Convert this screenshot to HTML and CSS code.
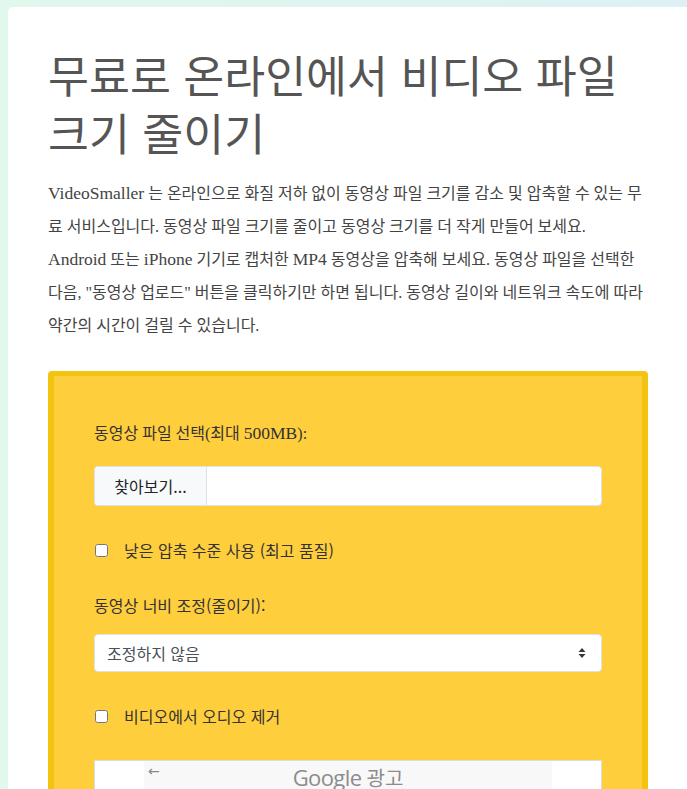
FILE: index.html
```html
<!DOCTYPE html>
<html lang="ko">
<head>
    <meta charset="utf-8">
    <link rel="stylesheet" href="styles.css">
</head>
<body>

<div class="card">
    <h1 class="title">무료로 온라인에서 비디오 파일 크기 줄이기</h1>
    <p class="intro"><span class="en">VideoSmaller</span> 는 온라인으로 화질 저하 없이 동영상 파일 크기를 감소 및 압축할 수 있는 무료 서비스입니다. 동영상 파일 크기를 줄이고 동영상 크기를 더 작게 만들어 보세요. <span class="en">Android</span> 또는 <span class="en">iPhone</span> 기기로 캡처한 <span class="en">MP4</span> 동영상을 압축해 보세요. 동영상 파일을 선택한 다음, "동영상 업로드" 버튼을 클릭하기만 하면 됩니다. 동영상 길이와 네트워크 속도에 따라 약간의 시간이 걸릴 수 있습니다.</p>

    <!-- 업로드 폼 -->
    <div class="upload-box">
        <div class="group">
            <div class="label">동영상 파일 선택(최대 <span class="en">500MB</span>):</div>
            <div class="file-input">
                <span class="browse">찾아보기...</span>
                <span class="file-name"></span>
            </div>
        </div>

        <div class="group">
            <label class="check"><input type="checkbox"> 낮은 압축 수준 사용 (최고 품질)</label>
        </div>

        <div class="group">
            <div class="label label-sans">동영상 너비 조정(줄이기):</div>
            <div class="select-wrap">
                <select class="select">
                    <option>조정하지 않음</option>
                </select>
                <svg class="select-arrow" width="8" height="12" viewBox="0 0 8 12">
                    <path d="M4 1 L7.5 5 H0.5 Z" fill="#343a40"/>
                    <path d="M4 11 L7.5 7 H0.5 Z" fill="#343a40"/>
                </svg>
            </div>
        </div>

        <div class="group">
            <label class="check"><input type="checkbox"> 비디오에서 오디오 제거</label>
        </div>

        <!-- 광고 -->
        <div class="ad">
            <div class="ad-inner">
                <span class="ad-back">&#8592;</span>
                <span class="ad-text">Google <span class="ad-ko">광고</span></span>
            </div>
        </div>
    </div>
</div>

</body>
</html>
```

FILE: styles.css
```css
body {
    margin: 0;
    padding: 7px 0 0 8px;
    background: linear-gradient(to right, #e1f8ed, #def0f4);
    font-family: "Liberation Serif", "Noto Sans CJK KR", serif;
    overflow: hidden;
}
.card {
    background-color: #fff;
    border-top-left-radius: 5px;
    padding: 38px 39px 60px 40px;
}
.title {
    margin: 0 0 16px 0;
    font-family: "Noto Sans CJK KR", sans-serif;
    font-weight: 400;
    font-size: 44.5px;
    line-height: 58px;
    color: #555;
}
.intro {
    margin: 0 0 29px 0;
    font-size: 16px;
    line-height: 33px;
    color: #444;
    width: 600px;
}
.en {
    font-size: 17.5px;
}
.upload-box {
    width: 508px;
    background-color: #ffce3d;
    border: 6px solid #f2c40f;
    border-top-width: 5px;
    border-radius: 4px;
    padding: 46px 40px 40px 40px;
}
.group {
    margin-bottom: 33px;
}
.label {
    font-size: 16px;
    line-height: 23px;
    color: #333;
    margin-bottom: 21px;
}
.label-sans {
    font-family: "Noto Sans CJK KR", sans-serif;
    margin-bottom: 17px;
}
.file-input {
    display: flex;
    height: 40px;
    border: 1px solid #dee2e6;
    border-radius: 4px;
    background-color: #fff;
    box-sizing: border-box;
    overflow: hidden;
}
.browse {
    width: 111px;
    background-color: #f8f9fa;
    border-right: 1px solid #dee2e6;
    font-family: "Noto Sans CJK KR", sans-serif;
    font-size: 16px;
    color: #212529;
    display: flex;
    align-items: center;
    justify-content: center;
}
.check {
    display: flex;
    align-items: center;
    height: 22px;
    font-family: "Noto Sans CJK KR", sans-serif;
    font-size: 16px;
    color: #333;
}
.check input {
    width: 13px;
    height: 13px;
    margin: 0 16px 0 1px;
}
.select-wrap {
    position: relative;
}
.select {
    width: 100%;
    height: 38px;
    appearance: none;
    border: 1px solid #dee2e6;
    border-radius: 4px;
    background-color: #fff;
    padding: 0 12px;
    font-family: "Noto Sans CJK KR", sans-serif;
    font-size: 16px;
    color: #495057;
}
.select-arrow {
    position: absolute;
    right: 16px;
    top: 13px;
}
.ad {
    height: 120px;
    border: 1px solid #ddd;
    background-color: #fff;
    padding: 0 49px;
}
.ad-inner {
    height: 100%;
    background-color: #f8f8f8;
    position: relative;
    text-align: center;
}
.ad-back {
    position: absolute;
    left: 4px;
    top: 2px;
    font-family: "DejaVu Sans", sans-serif;
    font-size: 14px;
    color: #888;
}
.ad-text {
    display: inline-block;
    margin-top: 1px;
    font-family: "Open Sans", sans-serif;
    font-size: 22px;
    letter-spacing: -0.6px;
    color: #8c8c8c;
}
.ad-ko {
    font-family: "Noto Sans CJK KR", sans-serif;
    font-size: 20px;
    letter-spacing: 0;
}
```
